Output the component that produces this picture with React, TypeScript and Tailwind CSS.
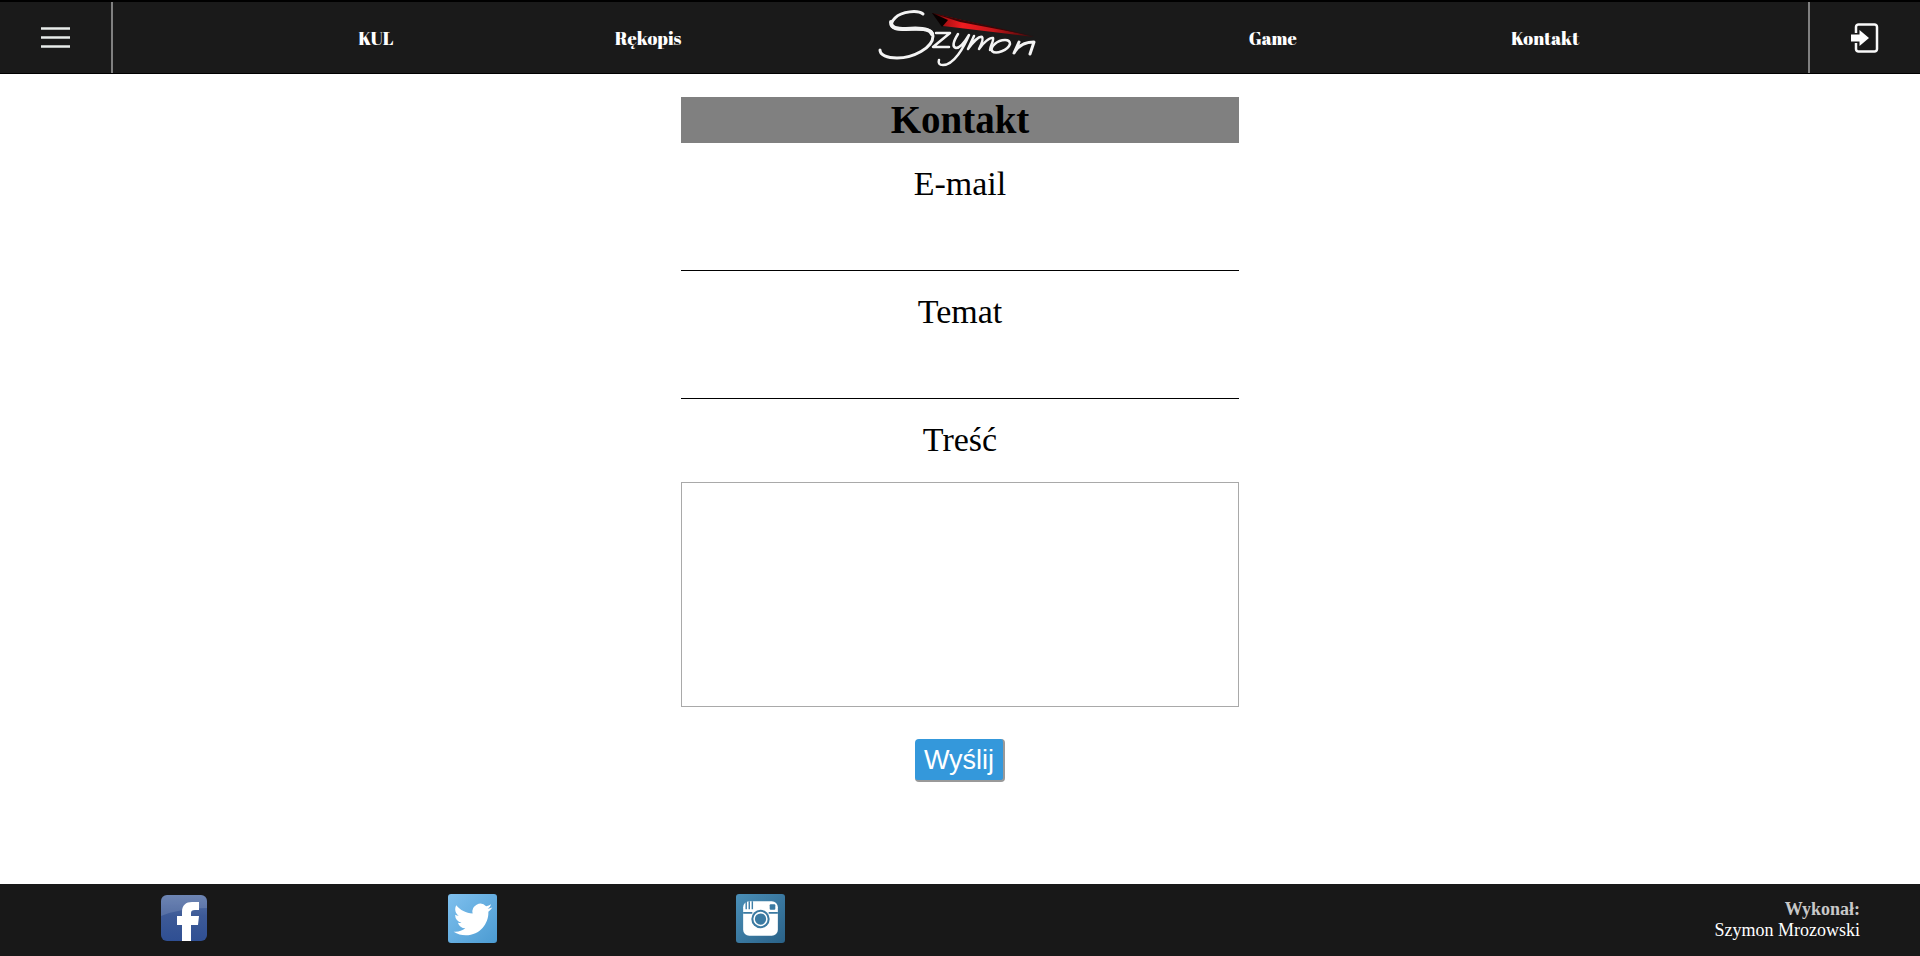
import React from "react";

const navLink =
  "pb-px text-center font-['Abril_Fatface','Liberation_Serif',serif] text-lg leading-6 font-normal text-white";

const fieldLabel = "pt-[21px] text-center text-[34px] leading-10";

function Logo() {
  return (
    <svg width="200" height="72" viewBox="0 0 200 72" fill="none" aria-label="Szymon" role="img">
      <defs>
        <linearGradient id="blade" x1="72" y1="0" x2="174" y2="0" gradientUnits="userSpaceOnUse">
          <stop offset="0" stopColor="#1a0000" />
          <stop offset="0.12" stopColor="#a80f12" />
          <stop offset="0.3" stopColor="#f01c20" />
          <stop offset="0.6" stopColor="#c4161a" />
          <stop offset="1" stopColor="#3a0405" />
        </linearGradient>
      </defs>
      <path d="M72 11 L174 35 L83 24 Z" fill="url(#blade)" />
      <path d="M72 11 L174 34 L100 20 Z" fill="#3c0506" />
      <path d="M72 11 L88 18 L82 25 Z" fill="#080000" />
      <g stroke="#f4f4f4" strokeLinecap="round" strokeLinejoin="round">
        <path d="M63 12 C58 8 42 9 35 16 C27 24 33 27 45 27 C60 27 73 26 73 34 C73 46 53 56 37 56 C27 56 20 53 20 48" strokeWidth="3" />
        <path d="M31 20 C31 27 38 27 46 27 C57 26 70 26 72 32" strokeWidth="4" />
        <path d="M76 31 L90 31 L73 45 L89 45" strokeWidth="2.5" />
        <path d="M98 32 C93 40 92 45 96 46 C101 46 106 38 109 33 C104 45 94 63 83 63 C79 63 78 61 79 58" strokeWidth="2.5" />
        <path d="M114 34 L108 47 C113 40 119 34 122 35 C124 37 121 43 119 47 C123 41 130 35 133 36 C134 39 130 44 130 48" strokeWidth="2.5" />
        <path d="M145 38 C137 38 130 45 132 49 C136 53 148 48 150 42 C150 39 148 38 145 38 Z" strokeWidth="2.500" />
        <path d="M159 40 L154 51 C158 44 164 40 174 40 L170 52" strokeWidth="3" />
      </g>
    </svg>
  );
}

function FacebookIcon() {
  return (
    <svg width="46" height="46" viewBox="0 0 46 46">
      <defs>
        <linearGradient id="fb" x1="0" y1="0" x2="0" y2="1">
          <stop offset="0" stopColor="#5873a8" />
          <stop offset="0.45" stopColor="#3d5a97" />
          <stop offset="1" stopColor="#2f4f93" />
        </linearGradient>
      </defs>
      <rect width="46" height="46" rx="6" fill="url(#fb)" />
      <path d="M0 21 V6 a6 6 0 0 1 6-6 H40 a6 6 0 0 1 6 6 V13 Q20 13 0 21 Z" fill="#fff" opacity="0.13" />
      <path d="M21 46 V30 H16 V21 H21 V17 C21 10 25 7 31 7 H38 V15 H34 C31 15 30 16 30 18 V21 H38 L37 30 H30 V46 Z" fill="#fff" />
    </svg>
  );
}

function TwitterIcon() {
  return (
    <svg width="49" height="49" viewBox="0 0 48 48">
      <defs>
        <linearGradient id="tw" x1="0" y1="0" x2="1" y2="1">
          <stop offset="0" stopColor="#7fc0ee" />
          <stop offset="1" stopColor="#4b9bd2" />
        </linearGradient>
      </defs>
      <rect width="48" height="48" rx="3" fill="url(#tw)" />
      <g transform="translate(5.500 6) scale(1.580)">
        <path
          fill="#fff"
          d="M23.953 4.57a10 10 0 01-2.825.775 4.958 4.958 0 002.163-2.723c-.951.555-2.005.959-3.127 1.184a4.92 4.92 0 00-8.384 4.482C7.69 8.095 4.067 6.13 1.64 3.162a4.822 4.822 0 00-.666 2.475c0 1.71.87 3.213 2.188 4.096a4.904 4.904 0 01-2.228-.616v.06a4.923 4.923 0 003.946 4.827 4.996 4.996 0 01-2.212.085 4.936 4.936 0 004.604 3.417 9.867 9.867 0 01-6.102 2.105c-.39 0-.779-.023-1.17-.067a13.995 13.995 0 007.557 2.209c9.053 0 13.998-7.496 13.998-13.985 0-.21 0-.42-.015-.63A9.935 9.935 0 0024 4.59z"
        />
      </g>
    </svg>
  );
}

function InstagramIcon() {
  return (
    <svg width="49" height="49" viewBox="0 0 48 48">
      <defs>
        <linearGradient id="ig" x1="0" y1="0" x2="1" y2="1">
          <stop offset="0" stopColor="#4a8fb8" />
          <stop offset="1" stopColor="#2a6288" />
        </linearGradient>
      </defs>
      <rect width="48" height="48" rx="3" fill="url(#ig)" />
      <rect x="7" y="7" width="34" height="34" rx="6" fill="#fff" />
      <path d="M10 7 V15 M13 7 V15 M16 7 V15" stroke="#3f7fa8" strokeWidth="1.400" />
      <rect x="33" y="10" width="5.500" height="5.500" rx="1" fill="#3b7aa2" />
      <path d="M7 18.500 H16 M32 18.500 H41" stroke="#3b7aa2" strokeWidth="1.500" />
      <circle cx="24" cy="24.500" r="9" fill="#3b7aa2" />
      <circle cx="24" cy="24.500" r="7" fill="#fff" />
      <circle cx="24" cy="24.500" r="5.500" fill="#3b7aa2" />
    </svg>
  );
}

function Field({ id, label, type }: { id: string; label: string; type: string }) {
  return (
    <div className="flex flex-col">
      <label htmlFor={id} className={fieldLabel}>
        {label}
      </label>
      <input
        id={id}
        type={type}
        className="mt-4 h-[51px] w-full border-b border-black bg-transparent px-2 text-2xl outline-none"
      />
    </div>
  );
}

export default function App() {
  return (
    <div className="flex min-h-screen flex-col bg-white font-['Liberation_Serif',serif] text-black">
      <header className="flex h-[74px] items-stretch border-t-2 border-b border-black bg-[#1a1a1a]">
        <button
          type="button"
          aria-label="Menu"
          className="flex w-[113px] items-center justify-center border-r-2 border-[#808080]"
        >
          <svg width="29" height="21" viewBox="0 0 29 21">
            <path d="M0 1.500 H29 M0 10.500 H29 M0 19.500 H29" stroke="#e8ecea" strokeWidth="2.500" />
          </svg>
        </button>
        <nav className="grid flex-1 grid-cols-[17fr_17fr_22fr_17fr_17fr] items-center px-[6.6%]">
          <a href="#kul" className={navLink}>KUL</a>
          <a href="#rekopis" className={navLink}>Rękopis</a>
          <a href="#home" className="flex justify-center">
            <Logo />
          </a>
          <a href="#game" className={navLink}>Game</a>
          <a href="#kontakt" className={navLink}>Kontakt</a>
        </nav>
        <button
          type="button"
          aria-label="Zaloguj"
          className="flex w-[112px] items-center justify-center border-l-2 border-[#808080]"
        >
          <svg width="28" height="30" viewBox="0 0 28 30">
            <path
              d="M5 10 V4 a2.500 2.500 0 0 1 2.500-2.500 H23.500 a2.500 2.500 0 0 1 2.500 2.500 V26 a2.500 2.500 0 0 1-2.500 2.500 H7.500 A2.500 2.500 0 0 1 5 26 V20"
              fill="none"
              stroke="#fafafa"
              strokeWidth="2.500"
            />
            <path d="M0 11.500 H8.500 V7 L18 15 L8.500 23 V18.500 H0 Z" fill="#fff" />
          </svg>
        </button>
      </header>

      <main className="mx-auto w-[29.1%] flex-1 pt-[23px]">
        <h1 className="bg-[#808080] text-center text-[39px] leading-[46px] font-bold">Kontakt</h1>
        <form className="flex flex-col" onSubmit={(e) => e.preventDefault()}>
          <Field id="email" label="E-mail" type="email" />
          <Field id="subject" label="Temat" type="text" />
          <label htmlFor="message" className={fieldLabel}>
            Treść
          </label>
          <textarea
            id="message"
            className="mt-[22px] h-[225px] w-full resize-none border border-[#a9a9a9] p-2 text-2xl outline-none"
          />
          <button
            type="submit"
            className="mx-auto mt-8 h-[43px] rounded border-r-2 border-b-2 border-[#999] bg-[#3498db] px-[9px] font-['Liberation_Sans',sans-serif] text-[27px] leading-8 text-white"
          >
            Wyślij
          </button>
        </form>
      </main>

      <footer className="flex h-[72px] items-center justify-between bg-[#181818]">
        <div className="ml-[2.1%] grid w-[45%] grid-cols-3 items-center justify-items-center pb-1">
          <a href="#facebook" aria-label="Facebook" className="flex"><FacebookIcon /></a>
          <a href="#twitter" aria-label="Twitter" className="flex"><TwitterIcon /></a>
          <a href="#instagram" aria-label="Instagram" className="flex"><InstagramIcon /></a>
        </div>
        <p className="mr-[60px] text-right text-lg leading-[21px] text-white">
          <span className="block font-bold text-[#c8c8c8]">Wykonał:</span>
          Szymon Mrozowski
        </p>
      </footer>
    </div>
  );
}
